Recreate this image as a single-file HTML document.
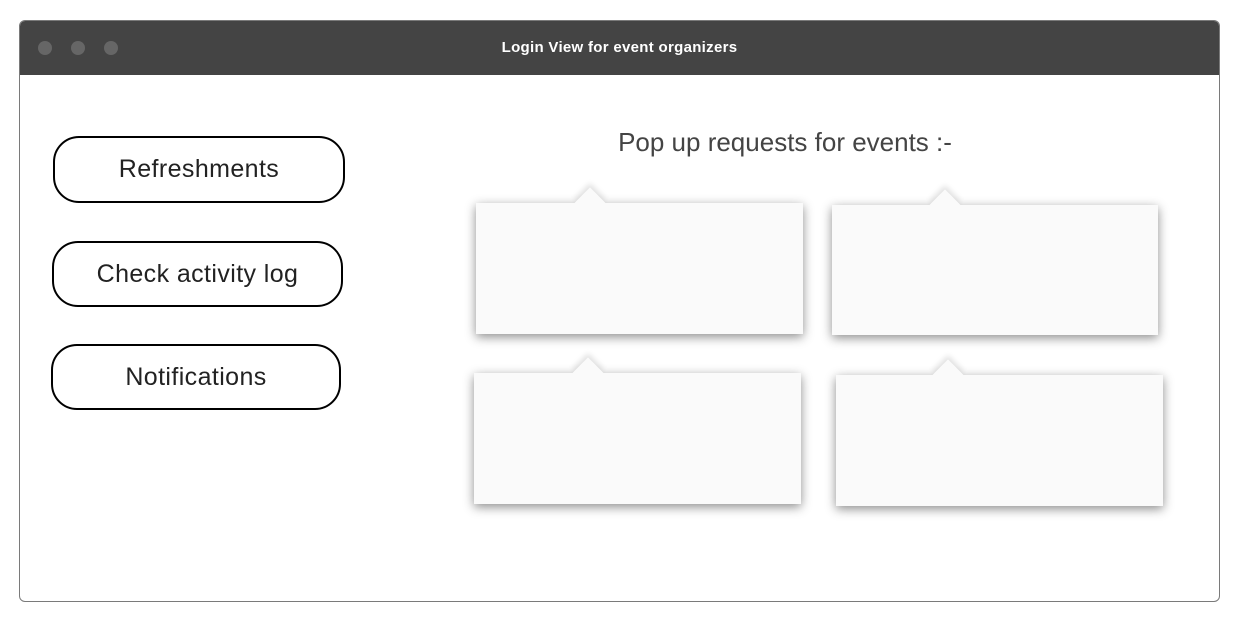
<!DOCTYPE html>
<html><head><style>
body{margin:0;width:1241px;height:625px;background:#fff;position:relative;overflow:hidden;font-family:"Liberation Sans","Noto Sans CJK JP",sans-serif}
.win{position:absolute;left:19px;top:20px;width:1199px;height:580px;border:1.5px solid #7a7a7a;border-radius:6px;overflow:hidden}
.bar{position:absolute;left:0;top:0;right:0;height:54px;background:#444;color:#fff;font-size:15px;font-weight:bold;letter-spacing:0.3px;text-align:center;line-height:54px}
.dot{position:absolute;top:20px;width:14px;height:14px;border-radius:50%;background:#666}
.btn{position:absolute;border:2px solid #000;border-radius:26px;box-sizing:border-box;text-align:center;font-size:25px;letter-spacing:0.4px;color:#222}
.box{position:absolute;background:#fafafa;box-shadow:0 3px 10px rgba(0,0,0,.45)}
.ar{position:absolute;width:22px;height:22px;background:#fafafa;transform:rotate(45deg);box-shadow:-3px -3px 6px rgba(0,0,0,.12)}
</style></head><body>
<div class="win">
<div class="bar">Login View for event organizers
<div class="dot" style="left:18px"></div><div class="dot" style="left:51px"></div><div class="dot" style="left:84px"></div></div>
</div>
<div class="btn" style="left:53px;top:136px;width:292px;height:67px;line-height:63px">Refreshments</div>
<div class="btn" style="left:52px;top:241px;width:291px;height:66px;line-height:62px">Check activity log</div>
<div class="btn" style="left:51px;top:344px;width:290px;height:66px;line-height:62px">Notifications</div>
<div style="position:absolute;left:560px;top:127px;width:450px;text-align:center;font-size:26px;color:#444">Pop up requests for events :-</div>
<div class="ar" style="left:579px;top:192px"></div>
<div class="ar" style="left:934px;top:194px"></div>
<div class="ar" style="left:577px;top:362px"></div>
<div class="ar" style="left:937px;top:364px"></div>
<div class="box" style="left:476px;top:203px;width:327px;height:131px"></div>
<div class="box" style="left:832px;top:205px;width:326px;height:130px"></div>
<div class="box" style="left:474px;top:373px;width:327px;height:131px"></div>
<div class="box" style="left:836px;top:375px;width:327px;height:131px"></div>
<div class="ar" style="left:579px;top:192px;box-shadow:none"></div>
<div class="ar" style="left:934px;top:194px;box-shadow:none"></div>
<div class="ar" style="left:577px;top:362px;box-shadow:none"></div>
<div class="ar" style="left:937px;top:364px;box-shadow:none"></div>
</body></html>
